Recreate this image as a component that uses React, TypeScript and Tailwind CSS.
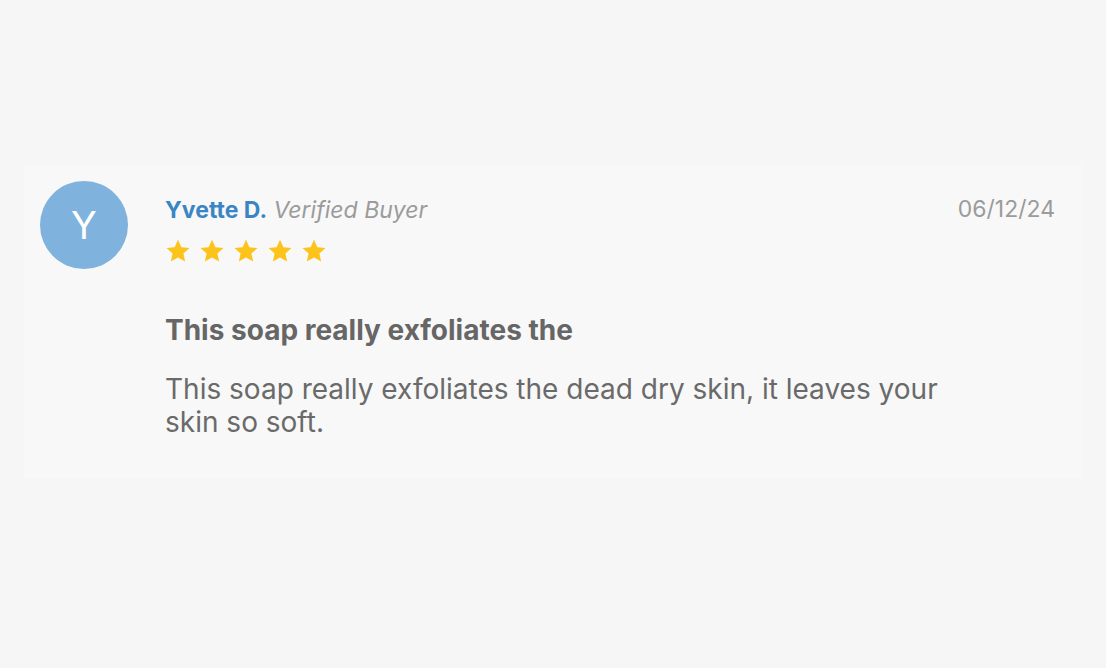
import React from 'react';

const Star = () => (
  <svg viewBox="0 0 24 24" className="w-[26px] h-[26px]" fill="#fcc41a">
    <path d="M12 1.6l3.1 6.9 7.5.8-5.6 5 1.6 7.4L12 17.9l-6.6 3.8 1.6-7.4-5.6-5 7.5-.8z" />
  </svg>
);

const App = () => {
  return (
    <div className="min-h-[668px] w-full bg-[#f6f6f6] pt-[165px] px-6 font-['Inter',sans-serif]">
      <div className="flex bg-[#f8f8f8] pl-4 pr-[27px] pt-4 pb-10">
        {/* Avatar */}
        <div className="w-[88px] h-[88px] shrink-0 rounded-full bg-[#7fb3de] flex items-center justify-center">
          <span className="text-white text-[38px] leading-none">Y</span>
        </div>

        <div className="flex-1 pl-[37px]">
          <div className="flex items-start justify-between pt-[15px]">
            <div>
              <div className="text-[23px] leading-[28px]">
                <span className="font-bold text-[#3a86c4]">Yvette D.</span>{' '}
                <span className="italic text-[#9b9b9b]">Verified Buyer</span>
              </div>
              <div className="flex gap-[8px] mt-[14px]">
                <Star />
                <Star />
                <Star />
                <Star />
                <Star />
              </div>
            </div>
            <div className="text-[23px] leading-[26px] text-[#9b9b9b]">06/12/24</div>
          </div>

          <h3 className="mt-[49px] text-[28px] leading-[34px] font-bold text-[#666666]">
            This soap really exfoliates the
          </h3>
          <p className="mt-[26px] max-w-[800px] text-[28px] leading-[33px] text-[#6a6a6a]">
            This soap really exfoliates the dead dry skin, it leaves your skin so soft.
          </p>
        </div>
      </div>
    </div>
  );
};

export default App;
